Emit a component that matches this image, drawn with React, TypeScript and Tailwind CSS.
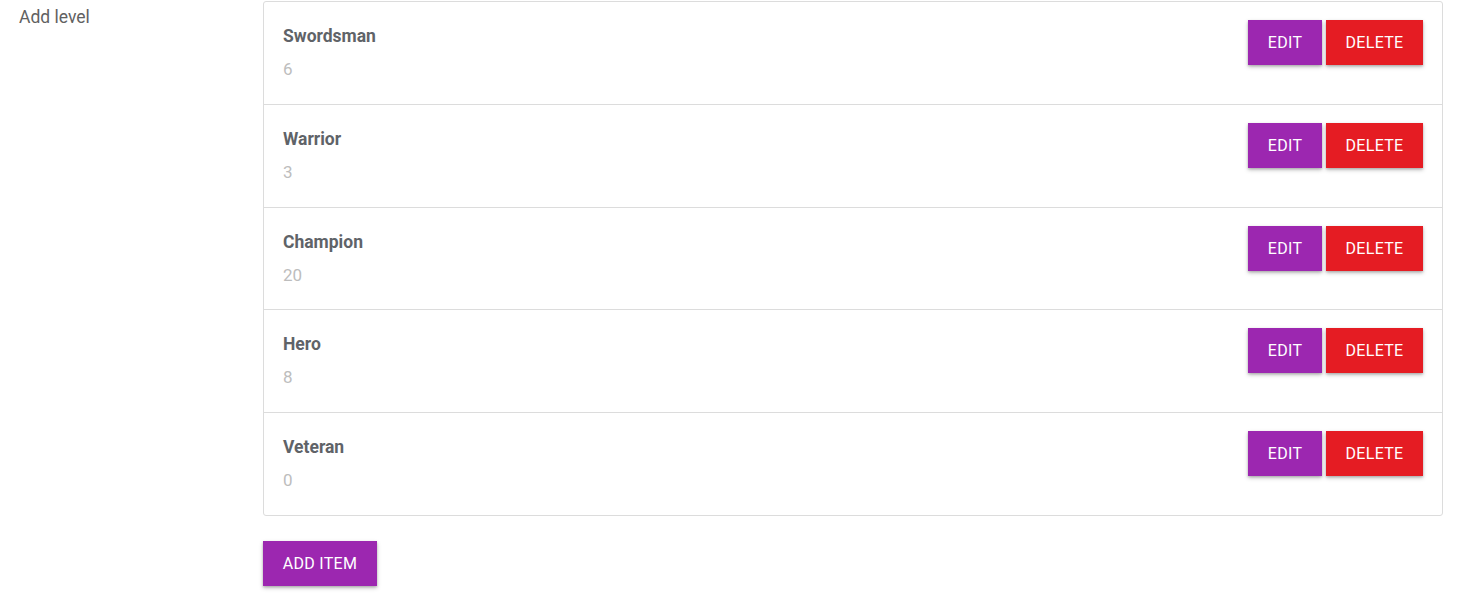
const levels = [
  { name: "Swordsman", value: 6, h: "h-[102px]" },
  { name: "Warrior", value: 3, h: "h-[103px]" },
  { name: "Champion", value: 20, h: "h-[102px]" },
  { name: "Hero", value: 8, h: "h-[103px]" },
  { name: "Veteran", value: 0, h: "h-[103px]" },
];

const btnShadow = "shadow-[0_2px_4px_rgba(0,0,0,0.25),0_1px_2px_rgba(0,0,0,0.15)]";

export default function App() {
  return (
    <div className="flex min-h-[604px] bg-white pt-px font-['Roboto',sans-serif]">
      <div className="w-[263px] shrink-0 pl-[19px] pt-[4px] text-[17.5px] leading-6 text-[#616161]">Add level</div>
      <div className="mr-[19px] flex-1">
        <div className="rounded-[3px] border border-[#dcdcdc]">
          {levels.map((level, i) => (
            <div
              key={level.name}
              className={
                "flex items-start justify-between px-[19px] pt-[18px] " + level.h + " "
                + (i > 0 ? "border-t border-[#dcdcdc]" : "")
              }
            >
              <div>
                <div className="text-[17.5px] font-bold leading-[32px] text-[#5f6368]">{level.name}</div>
                <div className="mt-[5px] text-[17px] leading-6 text-[#bdbdbd]">{level.value}</div>
              </div>
              <div className="flex gap-1">
                <button className={"h-[45px] w-[74px] bg-[#9c27b0] text-[16px] tracking-[0.3px] text-white " + btnShadow}>EDIT</button>
                <button className={"h-[45px] w-[97px] bg-[#e51c23] text-[16px] tracking-[0.3px] text-white " + btnShadow}>DELETE</button>
              </div>
            </div>
          ))}
        </div>
        <button className={"mt-[25px] h-[45px] w-[114px] bg-[#9c27b0] text-[16px] tracking-[0.3px] text-white " + btnShadow}>ADD ITEM</button>
      </div>
    </div>
  );
}
